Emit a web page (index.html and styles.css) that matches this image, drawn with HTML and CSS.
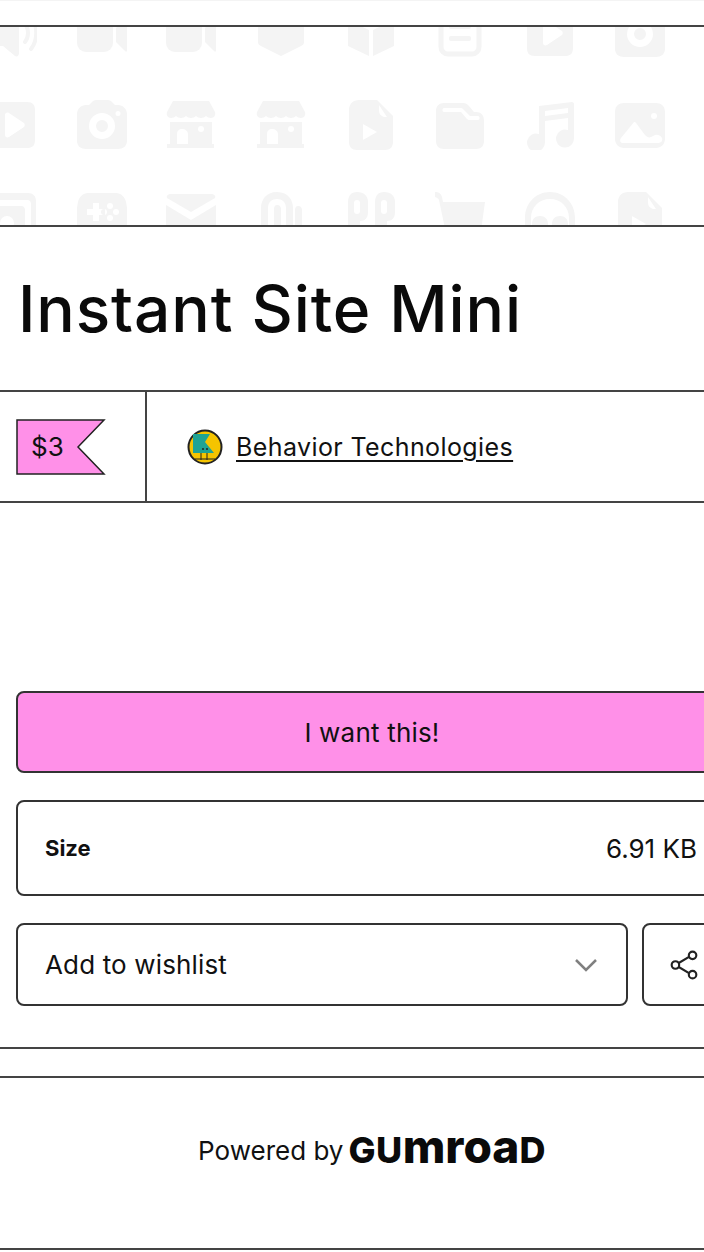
FILE: index.html
```html
<!DOCTYPE html>
<html lang="en">
<head>
  <meta charset="UTF-8">
  <title>Instant Site Mini</title>
  <link rel="stylesheet" href="styles.css">
</head>
<body>
  <svg class="sprites" width="0" height="0">
    <symbol id="i-speaker" viewBox="0 0 50 50"><path d="M4 12h12L28 2c2-1 4 0 4 3v40c0 3-2 4-4 3L16 38H4c-2 0-4-2-4-4V16c0-2 2-4 4-4z"/><path d="M38 16c4 5 4 13 0 18" fill="none" stroke="#f4f4f4" stroke-width="4" stroke-linecap="round"/><path d="M44 9c7 9 7 23 0 32" fill="none" stroke="#f4f4f4" stroke-width="4" stroke-linecap="round"/></symbol>
    <symbol id="i-video" viewBox="0 0 50 50"><rect x="0" y="6" width="36" height="38" rx="9"/><path d="M39 20l9-9c1-1 2-1 2 1v30c0 2-1 2-2 1l-9-9z"/></symbol>
    <symbol id="i-shield" viewBox="0 0 50 50"><path d="M2 2h46v32c0 2-1 3-3 4L25 48 5 38c-2-1-3-2-3-4z"/></symbol>
    <symbol id="i-book" viewBox="0 0 50 50"><path d="M23 22L2 12v26l21 10z"/><path d="M27 22l21-10v26L27 48z"/><path d="M5 8l20-7 20 7-20 10z"/></symbol>
    <symbol id="i-note" viewBox="0 0 50 50"><rect x="6" y="4" width="38" height="42" rx="7" fill="none" stroke="#f4f4f4" stroke-width="5"/><rect x="14" y="16" width="22" height="5" rx="2"/><rect x="14" y="28" width="22" height="5" rx="2"/></symbol>
    <symbol id="i-play" viewBox="0 0 50 50"><path fill-rule="evenodd" d="M10 2h30c6 0 8 3 8 8v30c0 6-3 8-8 8H10c-6 0-8-3-8-8V10c0-6 3-8 8-8zm8 13v20c0 2 2 3 4 2l15-10c1-1 1-3 0-4L22 13c-2-1-4 0-4 2z"/></symbol>
    <symbol id="i-camera" viewBox="0 0 50 50"><path fill-rule="evenodd" d="M9 5h3l3-3c1-1 2-2 4-2h12c2 0 3 1 4 2l3 3h3c5 0 9 4 9 9v27c0 5-4 8-9 8H9c-5 0-9-3-9-8V14c0-5 4-9 9-9zm16 8a13 13 0 100 26 13 13 0 000-26zm0 7a6 6 0 110 12 6 6 0 010-12zM41 11a2.500 2.500 0 100 5 2.500 2.500 0 000-5z"/></symbol>
    <symbol id="i-store" viewBox="0 0 50 50"><path d="M7 1h36l6 11c1 3-1 6-4 6-2 0-4-1-5-2-1 1-3 2-5 2s-4-1-5-2c-1 1-3 2-5 2s-4-1-5-2c-1 1-3 2-5 2s-4-1-5-2c-1 1-3 2-5 2-3 0-5-3-4-6z"/><path fill-rule="evenodd" d="M4 22h42v22h2v4H1v-4h3zm12 7c-3 0-5 2-5 5v10h11V34c0-3-3-5-6-5zm19-3a3 3 0 100 6 3 3 0 000-6z"/></symbol>
    <symbol id="i-file" viewBox="0 0 50 50"><path fill-rule="evenodd" d="M14 0h18l16 16v26c0 5-3 8-8 8H12c-5 0-8-3-8-8V10C4 4 8 0 14 0zm20 5v6c0 3 2 5 5 6h3zM18 24v16l14-8z" transform="translate(-1 0)"/></symbol>
    <symbol id="i-folder" viewBox="0 0 50 50"><path fill-rule="evenodd" d="M9 3h19c3 0 4 1 6 3l5 6h2c5 0 8 3 8 9v20c0 5-3 8-8 8H9c-5 0-8-3-8-8V11c0-5 3-8 8-8zm0 5c-2 0-2 4 0 4h17l6 7c1 1 2 1 3 1h8c2 0 2-4 0-4h-8L28 9c-1-1-1-1-3-1z"/></symbol>
    <symbol id="i-music" viewBox="0 0 50 50"><path fill-rule="evenodd" d="M14 6l33-4c1 0 2 1 2 2v34a9 9 0 11-6-8V18L20 21v21a9 9 0 11-6-8zm6 5v5l23-3V8z"/></symbol>
    <symbol id="i-image" viewBox="0 0 50 50"><path fill-rule="evenodd" d="M9 3h32c5 0 9 3 9 9v27c0 5-4 9-9 9H9c-5 0-9-4-9-9V12c0-6 4-9 9-9zM39 13a3 3 0 100 6 3 3 0 000-6zM19 22L6 38c-2 3 0 5 2 5h34c4 0 6-2 5-5-1-2-4-4-7-3l-4 2c-2 1-4 0-6-2l-6-8c-2-3-3-5-5-5z"/></symbol>
    <symbol id="i-receipt" viewBox="0 0 50 50"><path fill-rule="evenodd" d="M9 1h32c5 0 8 3 8 8v32c0 5-3 8-8 8H9c-5 0-8-3-8-8V9c0-5 3-8 8-8zm4 7c-3 0-4 2-4 4v2h25c3 0 4 2 4 4v27h3c2 0 3-1 3-3V12c0-2-1-4-4-4zM20 24a7 7 0 100 14 7 7 0 000-14z"/></symbol>
    <symbol id="i-pad" viewBox="0 0 50 50"><path fill-rule="evenodd" d="M11 1h28c5 0 9 4 10 9l5 28c1 6-2 11-8 11-4 0-6-2-8-5l-2-4H14l-2 4c-2 3-4 5-8 5-6 0-9-5-8-11l5-28C2 5 6 1 11 1zm5 10v6h-6v6h6v6h6v-6h6v-6h-6v-6zm17 0a3 3 0 100 6 3 3 0 000-6zm-6 6a3 3 0 100 6 3 3 0 000-6zm12 0a3 3 0 100 6 3 3 0 000-6zm-6 6a3 3 0 100 6 3 3 0 000-6z"/></symbol>
    <symbol id="i-mail" viewBox="0 0 50 50"><path d="M5 2h40c3 0 5 2 4 4L25 20 1 6C0 4 2 2 5 2z"/><path d="M0 13l25 15 25-15v28c0 4-3 6-6 6H6c-3 0-6-2-6-6z"/></symbol>
    <symbol id="i-clip" viewBox="0 0 50 50"><path fill-rule="evenodd" d="M21 0c12 0 16 9 16 16v34h-7V16c0-6-4-9-9-9s-9 3-9 9v34H5V16C5 8 10 0 21 0zm0 13c3 0 4 2 4 4v33h-7V17c0-2 1-4 3-4zM42 14c3 0 4 2 4 4v32h-7V18c0-2 1-4 3-4z"/></symbol>
    <symbol id="i-quote" viewBox="0 0 50 50"><path fill-rule="evenodd" d="M11 0c7 0 11 4 11 10v10c0 6-3 9-8 9v12c0 4-3 6-6 6H2V10C2 4 5 0 11 0zm0 8c-2 0-3 1-3 3v8c0 2 1 3 3 3s3-1 3-3v-8c0-2-1-3-3-3zM38 0c7 0 11 4 11 10v10c0 6-3 9-8 9v12c0 4-3 6-6 6h-6V10c0-6 3-10 9-10zm0 8c-2 0-3 1-3 3v8c0 2 1 3 3 3s3-1 3-3v-8c0-2-1-3-3-3z"/></symbol>
    <symbol id="i-cart" viewBox="0 0 50 50"><path d="M0 0c3 0 6 1 7 5l1 5h42l-5 36c0 2-2 4-5 4H16c-2 0-4-2-4-4L4 8C3 6 2 6 0 5z"/></symbol>
    <symbol id="i-phones" viewBox="0 0 50 50"><path d="M25 0C11 0 0 11 0 26v20h6V26C6 15 14 7 25 7s19 8 19 19v20h6V26C50 11 39 0 25 0z"/><path d="M7 32c0-5 3-8 8-8s8 3 8 8v10H7zM27 32c0-5 3-8 8-8s8 3 8 8v10H27z"/></symbol>
  </svg>

  <div class="page">
    <div class="top-gap"></div>

    <!-- cover -->
    <div class="cover">
      <div class="pattern">
        <svg class="ico"><use href="#i-speaker"/></svg>
        <svg class="ico"><use href="#i-video"/></svg>
        <svg class="ico"><use href="#i-video"/></svg>
        <svg class="ico"><use href="#i-shield"/></svg>
        <svg class="ico"><use href="#i-book"/></svg>
        <svg class="ico"><use href="#i-note"/></svg>
        <svg class="ico"><use href="#i-play"/></svg>
        <svg class="ico"><use href="#i-camera"/></svg>

        <svg class="ico"><use href="#i-play"/></svg>
        <svg class="ico"><use href="#i-camera"/></svg>
        <svg class="ico"><use href="#i-store"/></svg>
        <svg class="ico"><use href="#i-store"/></svg>
        <svg class="ico"><use href="#i-file"/></svg>
        <svg class="ico"><use href="#i-folder"/></svg>
        <svg class="ico"><use href="#i-music"/></svg>
        <svg class="ico"><use href="#i-image"/></svg>

        <svg class="ico"><use href="#i-receipt"/></svg>
        <svg class="ico"><use href="#i-pad"/></svg>
        <svg class="ico"><use href="#i-mail"/></svg>
        <svg class="ico"><use href="#i-clip"/></svg>
        <svg class="ico"><use href="#i-quote"/></svg>
        <svg class="ico"><use href="#i-cart"/></svg>
        <svg class="ico"><use href="#i-phones"/></svg>
        <svg class="ico"><use href="#i-file"/></svg>
      </div>
    </div>

    <h1 class="title">Instant Site Mini</h1>

    <div class="meta">
      <div class="price-cell">
        <svg class="price-tag" viewBox="0 0 90 56">
          <polygon points="1,1 88,1 62,28 88,55 1,55" fill="#ff90e8" stroke="#222" stroke-width="1.500"/>
          <text class="price-text" x="15" y="37">$3</text>
        </svg>
      </div>
      <div class="seller-cell">
        <svg class="avatar" viewBox="0 0 36 36">
          <circle cx="18" cy="18" r="16.500" fill="#f5c400" stroke="#222" stroke-width="2"/>
          <path d="M6 5h17l-5 8 9 11H6z" fill="#1fa394"/>
          <path d="M14 24v7M20 24v7M8 30h20" stroke="#222" stroke-width="1" fill="none"/>
          <circle cx="16" cy="20" r="1" fill="#222"/>
          <circle cx="20" cy="20" r="1" fill="#222"/>
        </svg>
        <a class="seller-link" href="#">Behavior Technologies</a>
      </div>
    </div>

    <div class="buy">
      <a class="btn-want" href="#">I want this!</a>

      <div class="info-row">
        <b>Size</b>
        <span>6.91 KB</span>
      </div>

      <div class="actions">
        <div class="wishlist">
          <span>Add to wishlist</span>
          <svg class="chevron" viewBox="0 0 24 24"><path d="M2 7l10 10L22 7" fill="none" stroke="#808080" stroke-width="2.500"/></svg>
        </div>
        <div class="share">
          <svg class="share-ico" viewBox="0 0 28 28">
            <path d="M6 14L21 5M6 14l15 9" stroke="#222" stroke-width="2" fill="none"/>
            <circle cx="6" cy="14" r="3.500" fill="#fff" stroke="#222" stroke-width="2"/>
            <circle cx="22" cy="5" r="3.500" fill="#fff" stroke="#222" stroke-width="2"/>
            <circle cx="22" cy="23" r="3.500" fill="#fff" stroke="#222" stroke-width="2"/>
          </svg>
        </div>
      </div>
    </div>

    <div class="band"></div>

    <div class="footer">
      <span class="powered">Powered by</span>
      <span class="wordmark">GU<span class="wordmark-low">mroa</span>D</span>
    </div>
  </div>
</body>
</html>
```

FILE: styles.css
```css
* {
  box-sizing: border-box;
}

html, body {
  margin: 0;
  background: #fff;
  overflow: hidden;
}

body {
  height: 1252px;
  font-family: Inter, "Liberation Sans", sans-serif;
  color: #111;
}

.sprites {
  position: absolute;
}

.page {
  width: 740px;
}

.top-gap {
  height: 25px;
  border-top: 1px solid #f4f4f4;
}

.cover {
  height: 202px;
  border-top: 2px solid #444;
  border-bottom: 2px solid #444;
  overflow: hidden;
}

.pattern {
  display: grid;
  grid-template-columns: repeat(8, 50px);
  column-gap: 39.7px;
  row-gap: 42px;
  margin: -19px 0 0 -13px;
}

.ico {
  width: 50px;
  height: 50px;
  fill: #f4f4f4;
}

.title {
  height: 163px;
  margin: 0;
  padding-left: 18px;
  display: flex;
  align-items: center;
  font-size: 64px;
  font-weight: 500;
  letter-spacing: 0.9px;
  color: #0a0a0a;
}

.meta {
  display: flex;
  height: 113px;
  border-top: 2px solid #444;
  border-bottom: 2px solid #444;
}

.price-cell {
  width: 147px;
  padding-left: 16px;
  display: flex;
  align-items: center;
  border-right: 2px solid #444;
}

.price-tag {
  width: 90px;
  height: 56px;
}

.price-text {
  font-size: 26px;
  fill: #111;
}

.seller-cell {
  padding-left: 40px;
  display: flex;
  align-items: center;
  gap: 13px;
}

.avatar {
  width: 36px;
  height: 36px;
}

.seller-link {
  font-size: 25px;
  letter-spacing: 0.4px;
  color: #111;
  text-decoration: underline;
  text-underline-offset: 4px;
  text-decoration-thickness: 2px;
}

.buy {
  height: 546px;
  padding: 188px 16px 0;
  border-bottom: 2px solid #444;
}

.btn-want {
  width: 712px;
  height: 82px;
  display: flex;
  align-items: center;
  justify-content: center;
  font-size: 26px;
  letter-spacing: 0.2px;
  color: #111;
  text-decoration: none;
  background: #ff90e8;
  border: 2px solid #333;
  border-radius: 8px;
}

.info-row {
  height: 96px;
  margin-top: 27px;
  padding: 0 25px 0 27px;
  display: flex;
  align-items: center;
  justify-content: space-between;
  border: 2px solid #333;
  border-radius: 8px;
  font-size: 26px;
}

.info-row b {
  font-size: 22px;
  font-weight: 700;
}

.actions {
  display: flex;
  gap: 14px;
  margin-top: 27px;
}

.wishlist {
  width: 612px;
  height: 83px;
  padding: 0 28px 0 27px;
  display: flex;
  align-items: center;
  justify-content: space-between;
  border: 2px solid #333;
  border-radius: 8px;
  font-size: 26px;
  letter-spacing: 0.15px;
}

.chevron {
  width: 24px;
  height: 24px;
}

.share {
  width: 82px;
  height: 83px;
  padding-left: 2px;
  display: flex;
  align-items: center;
  justify-content: center;
  border: 2px solid #333;
  border-radius: 8px;
}

.share-ico {
  width: 30px;
  height: 30px;
}

.band {
  height: 27px;
}

.footer {
  height: 174px;
  padding: 0 0 26px 4px;
  display: flex;
  align-items: center;
  justify-content: center;
  gap: 5px;
  border-top: 2px solid #444;
  border-bottom: 2px solid #444;
}

.powered {
  font-size: 26px;
}

.wordmark {
  padding-bottom: 8px;
  font-size: 36px;
  font-weight: 800;
  letter-spacing: 0.5px;
  color: #0a0a0a;
}

.wordmark-low {
  font-size: 46px;
  letter-spacing: 0;
}
```
